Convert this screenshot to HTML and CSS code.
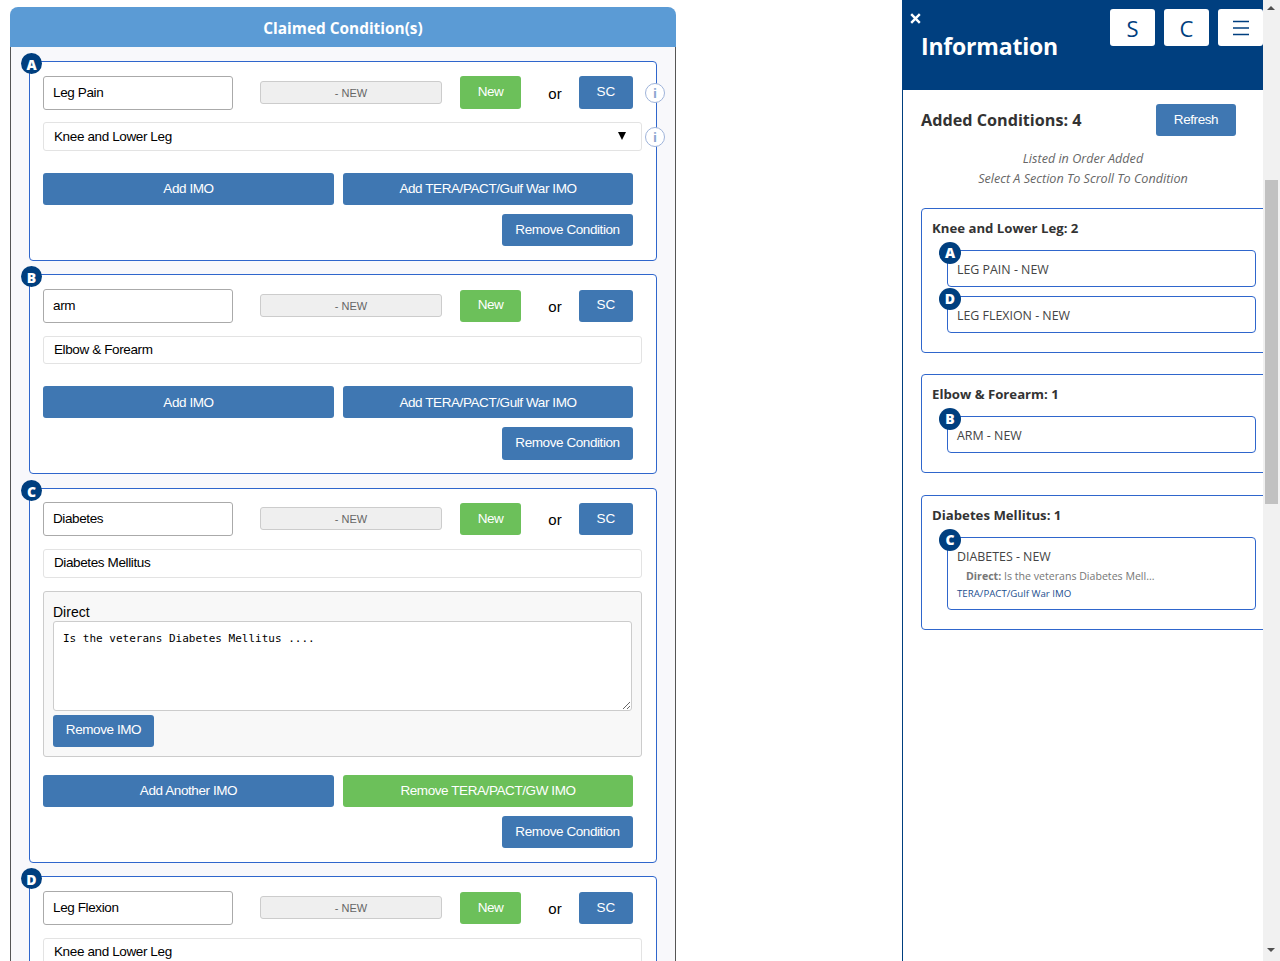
FILE: index.html
```html
<!DOCTYPE html>
<html lang="en">
<head>
    <meta charset="UTF-8">
    <meta name="viewport" content="width=device-width, initial-scale=1.0">
    <title>Claimed Conditions</title>
    <link rel="stylesheet" href="styles.css">
</head>
<body>
    <div class="claims">
        <h2 class="claims-title">Claimed Condition(s)</h2>
        <div class="claims-body">

            <!-- Condition A -->
            <div class="card">
                <span class="badge">A</span>
                <div class="row-top">
                    <input class="name-input" type="text" value="Leg Pain">
                    <div class="status">- NEW</div>
                    <button class="btn btn-green btn-small new-btn">New</button>
                    <span class="or">or</span>
                    <button class="btn btn-small sc-btn">SC</button>
                </div>
                <span class="info info-name">i</span>
                <div class="select-box"><span>Knee and Lower Leg</span><span class="arrow"></span></div>
                <span class="info info-select">i</span>
                <div class="row-imo">
                    <button class="btn btn-imo">Add IMO</button>
                    <button class="btn btn-tera">Add TERA/PACT/Gulf War IMO</button>
                </div>
                <div class="row-remove"><button class="btn btn-remove">Remove Condition</button></div>
            </div>

            <!-- Condition B -->
            <div class="card">
                <span class="badge">B</span>
                <div class="row-top">
                    <input class="name-input" type="text" value="arm">
                    <div class="status">- NEW</div>
                    <button class="btn btn-green btn-small new-btn">New</button>
                    <span class="or">or</span>
                    <button class="btn btn-small sc-btn">SC</button>
                </div>
                <div class="select-box"><span>Elbow &amp; Forearm</span></div>
                <div class="row-imo">
                    <button class="btn btn-imo">Add IMO</button>
                    <button class="btn btn-tera">Add TERA/PACT/Gulf War IMO</button>
                </div>
                <div class="row-remove"><button class="btn btn-remove">Remove Condition</button></div>
            </div>

            <!-- Condition C -->
            <div class="card card-long">
                <span class="badge">C</span>
                <div class="row-top">
                    <input class="name-input" type="text" value="Diabetes">
                    <div class="status">- NEW</div>
                    <button class="btn btn-green btn-small new-btn">New</button>
                    <span class="or">or</span>
                    <button class="btn btn-small sc-btn">SC</button>
                </div>
                <div class="select-box"><span>Diabetes Mellitus</span></div>
                <div class="imo-box">
                    <label class="imo-label">Direct</label>
                    <textarea class="imo-text">Is the veterans Diabetes Mellitus ....</textarea>
                    <button class="btn btn-remove-imo">Remove IMO</button>
                </div>
                <div class="row-imo row-imo-after">
                    <button class="btn btn-imo">Add Another IMO</button>
                    <button class="btn btn-green btn-tera">Remove TERA/PACT/GW IMO</button>
                </div>
                <div class="row-remove"><button class="btn btn-remove">Remove Condition</button></div>
            </div>

            <!-- Condition D -->
            <div class="card">
                <span class="badge">D</span>
                <div class="row-top">
                    <input class="name-input" type="text" value="Leg Flexion">
                    <div class="status">- NEW</div>
                    <button class="btn btn-green btn-small new-btn">New</button>
                    <span class="or">or</span>
                    <button class="btn btn-small sc-btn">SC</button>
                </div>
                <div class="select-box"><span>Knee and Lower Leg</span></div>
            </div>
        </div>
    </div>

    <div class="side">
        <div class="side-head">
            <div class="side-head-left">
                <svg class="close-icon" width="11" height="11" viewBox="0 0 11 11"><path d="M1.2 1.2 L9.8 9.8 M9.8 1.2 L1.2 9.8" stroke="#fff" stroke-width="2.4" fill="none"/></svg>
                <h1 class="side-title">Information</h1>
            </div>
            <div class="side-tabs">
                <button class="tab">S</button>
                <button class="tab">C</button>
                <button class="tab">
                    <svg width="16" height="16" viewBox="0 0 16 16"><path d="M0 1.5 H16 M0 8 H16 M0 14.5 H16" stroke="#003f7f" stroke-width="1.6" fill="none"/></svg>
                </button>
            </div>
        </div>
        <div class="side-body">
            <div class="added-row">
                <span class="added-text">Added Conditions: 4</span>
                <button class="btn btn-refresh">Refresh</button>
            </div>
            <div class="note">Listed in Order Added<br>Select A Section To Scroll To Condition</div>

            <div class="group">
                <div class="group-title">Knee and Lower Leg: 2</div>
                <div class="item"><span class="badge badge-item">A</span>LEG PAIN - NEW</div>
                <div class="item"><span class="badge badge-item">D</span>LEG FLEXION - NEW</div>
            </div>

            <div class="group">
                <div class="group-title">Elbow &amp; Forearm: 1</div>
                <div class="item"><span class="badge badge-item">B</span>ARM - NEW</div>
            </div>

            <div class="group">
                <div class="group-title">Diabetes Mellitus: 1</div>
                <div class="item">
                    <span class="badge badge-item">C</span>DIABETES - NEW
                    <div class="item-imo"><strong>Direct:</strong> Is the veterans Diabetes Mell...</div>
                    <div class="item-link">TERA/PACT/Gulf War IMO</div>
                </div>
            </div>
        </div>
    </div>

    <div class="scrollbar">
        <span class="scroll-up"></span>
        <div class="scroll-thumb"></div>
        <span class="scroll-down"></span>
    </div>
</body>
</html>
```

FILE: styles.css
```css
html, body {
    height: 100%;
    margin: 0;
}
body {
    display: flex;
    overflow: hidden;
    background: #fff;
    font-family: "Liberation Sans", Arial, sans-serif;
    font-size: 13.5px;
    color: #000;
}

/* left panel */
.claims {
    width: 666px;
    height: 954px;
    margin: 7px 0 0 10px;
    flex: none;
    overflow: hidden;
}
.claims-title {
    margin: 0;
    height: 40px;
    line-height: 43px;
    background: #5b9bd5;
    border-radius: 8px 8px 0 0;
    color: #fff;
    font-family: "Open Sans", sans-serif;
    font-size: 15.4px;
    font-weight: 700;
    text-align: center;
}
.claims-body {
    height: 914px;
    box-sizing: border-box;
    padding: 13.75px 0 0 18px;
    overflow: hidden;
    background: #f8f8fb;
    border-left: 1px solid #555;
    border-right: 1px solid #555;
}
.card {
    position: relative;
    width: 628px;
    box-sizing: border-box;
    margin-bottom: 13.5px;
    padding: 13.8px 14px 13.2px 13px;
    background: #fff;
    border: 1px solid #2f66cc;
    border-radius: 4px;
}
.card-long {
    margin-bottom: 13.85px;
    padding-bottom: 13.25px;
}
.badge {
    position: absolute;
    left: -9px;
    top: -9px;
    width: 21px;
    height: 21px;
    border-radius: 50%;
    background: #003f7f;
    color: #fff;
    font-family: "Open Sans", sans-serif;
    font-size: 14px;
    font-weight: 800;
    line-height: 23px;
    text-align: center;
}
.row-top {
    display: flex;
    align-items: flex-start;
}
.name-input {
    width: 190px;
    height: 34px;
    box-sizing: border-box;
    padding: 0 9px 1px;
    background: #fff;
    border: 1px solid #aaa;
    border-radius: 3px;
    font: 13.5px "Liberation Sans", Arial, sans-serif;
    letter-spacing: -0.38px;
    color: #000;
}
.status {
    width: 182px;
    height: 23px;
    box-sizing: border-box;
    margin: 5px 18px 0 27px;
    background: #efefef;
    border: 1px solid #ccc;
    border-radius: 3px;
    color: #666;
    font-size: 11px;
    line-height: 22px;
    text-align: center;
}
.or {
    width: 48px;
    margin-top: 9px;
    padding-left: 10px;
    font-size: 15px;
    line-height: 18px;
    text-align: center;
}
.btn {
    height: 32px;
    padding: 0;
    background: #3f77b2;
    border: 0;
    border-radius: 3px;
    color: #fff;
    font: 13.5px "Liberation Sans", Arial, sans-serif;
    letter-spacing: -0.42px;
}
.btn-green {
    background: #6cc05a;
}
.btn-small {
    height: 32.5px;
    margin-top: 0.7px;
    padding-bottom: 2px;
}
.new-btn {
    width: 61px;
}
.sc-btn {
    width: 54px;
    letter-spacing: 0;
}
.info {
    position: absolute;
    left: 615px;
    width: 20px;
    height: 20px;
    box-sizing: border-box;
    background: #fff;
    border: 1px solid #9fb4da;
    border-radius: 50%;
    color: #8ea6d0;
    font-family: "Open Sans", sans-serif;
    font-size: 13px;
    font-weight: 700;
    line-height: 18px;
    text-align: center;
}
.info-name {
    top: 21px;
}
.info-select {
    top: 65px;
}
.select-box {
    display: flex;
    justify-content: space-between;
    align-items: center;
    width: 599px;
    height: 28.8px;
    box-sizing: border-box;
    margin-top: 12.6px;
    padding: 0 15px 1px 10px;
    background: #fff;
    border: 1px solid #e3e3e3;
    border-radius: 3px;
    letter-spacing: -0.38px;
}
.arrow {
    width: 0;
    height: 0;
    border-left: 4.5px solid transparent;
    border-right: 4.5px solid transparent;
    border-top: 8px solid #000;
}
.row-imo {
    display: flex;
    gap: 9px;
    margin-top: 22px;
}
.row-imo-after {
    margin-top: 18.2px;
}
.btn-imo {
    width: 291px;
}
.btn-tera {
    width: 290px;
}
.row-remove {
    display: flex;
    justify-content: flex-end;
    width: 590px;
    margin-top: 9px;
}
.btn-remove {
    width: 131px;
    height: 32.5px;
    padding-bottom: 2px;
}
.imo-box {
    width: 599px;
    box-sizing: border-box;
    margin-top: 13.6px;
    padding: 9px;
    background: #f8f8f8;
    border: 1px solid #ccc;
    border-radius: 3px;
}
.imo-label {
    display: block;
    height: 20px;
    line-height: 23px;
    font-size: 14px;
}
.imo-text {
    display: block;
    width: 579px;
    height: 89.4px;
    box-sizing: border-box;
    margin: 0 0 4px;
    padding: 10px 9px;
    background: #fff;
    border: 1px solid #ccc;
    border-radius: 3px;
    font: 11px "DejaVu Sans Mono", monospace;
    color: #000;
}
.btn-remove-imo {
    display: block;
    width: 101px;
    padding-bottom: 3px;
}

/* right panel */
.side {
    width: 361px;
    height: 100%;
    box-sizing: border-box;
    margin-left: auto;
    flex: none;
    overflow: hidden;
    border-left: 1px solid #003f7f;
}
.side-head {
    display: flex;
    justify-content: space-between;
    height: 90px;
    background: #003f7f;
}
.side-head-left {
    padding: 13px 0 0 7px;
}
.close-icon {
    display: block;
}
.side-title {
    margin: 6px 0 0 11px;
    color: #fff;
    font-family: "Open Sans", sans-serif;
    font-size: 23px;
    font-weight: 700;
    letter-spacing: -0.2px;
    line-height: 32px;
}
.side-tabs {
    display: flex;
    gap: 9px;
    padding-top: 9px;
}
.tab {
    display: flex;
    justify-content: center;
    align-items: center;
    width: 45px;
    height: 37px;
    padding: 0;
    background: #fff;
    border: 0;
    border-radius: 3px;
    color: #003f7f;
    font-family: "Open Sans", sans-serif;
    font-size: 22px;
}
.side-body {
    padding: 14px 0 0 18px;
    font-family: "Open Sans", sans-serif;
    color: #333;
}
.added-row {
    display: flex;
    align-items: center;
    height: 32px;
}
.added-text {
    width: 235px;
    font-size: 16.2px;
    font-weight: 700;
    line-height: 38px;
}
.btn-refresh {
    width: 80px;
    padding-bottom: 2px;
}
.note {
    width: 324px;
    margin: 12.5px 0 19.4px;
    color: #666;
    font-size: 12.6px;
    font-style: italic;
    line-height: 20px;
    text-align: center;
}
.group {
    width: 350px;
    box-sizing: border-box;
    margin: 0 0 21.5px;
    padding: 9px 0 19px 10px;
    background: #fff;
    border: 1px solid #2f66cc;
    border-radius: 4px;
}
.group-title {
    margin-bottom: 12px;
    font-size: 13.2px;
    font-weight: 700;
    line-height: 20px;
}
.group .item:last-child {
    margin-bottom: 0;
}
.item {
    position: relative;
    width: 309px;
    box-sizing: border-box;
    margin: 0 0 9px 15px;
    padding: 10px 9px 7px;
    border: 1px solid #2f66cc;
    border-radius: 4px;
    font-size: 12.4px;
    line-height: 18px;
    color: #444;
}
.badge-item {
    left: -9px;
    top: -9px;
    width: 22px;
    height: 22px;
    line-height: 22px;
}
.item-imo {
    margin-left: 9px;
    color: #777;
    font-size: 10.6px;
    line-height: 21px;
}
.item-link {
    padding-bottom: 2px;
    color: #1c4f8f;
    font-size: 9.7px;
    line-height: 13px;
}

/* page scrollbar */
.scrollbar {
    width: 17px;
    height: 100%;
    flex: none;
    position: relative;
    background: #f1f1f1;
}
.scroll-thumb {
    margin: 180px 2px 0;
    height: 324px;
    background: #c1c1c1;
}
.scroll-up, .scroll-down {
    position: absolute;
    left: 4px;
    width: 0;
    height: 0;
    border-left: 4px solid transparent;
    border-right: 4px solid transparent;
}
.scroll-up {
    top: 6px;
    border-bottom: 4px solid #505050;
}
.scroll-down {
    bottom: 9px;
    border-top: 4px solid #505050;
}
```
